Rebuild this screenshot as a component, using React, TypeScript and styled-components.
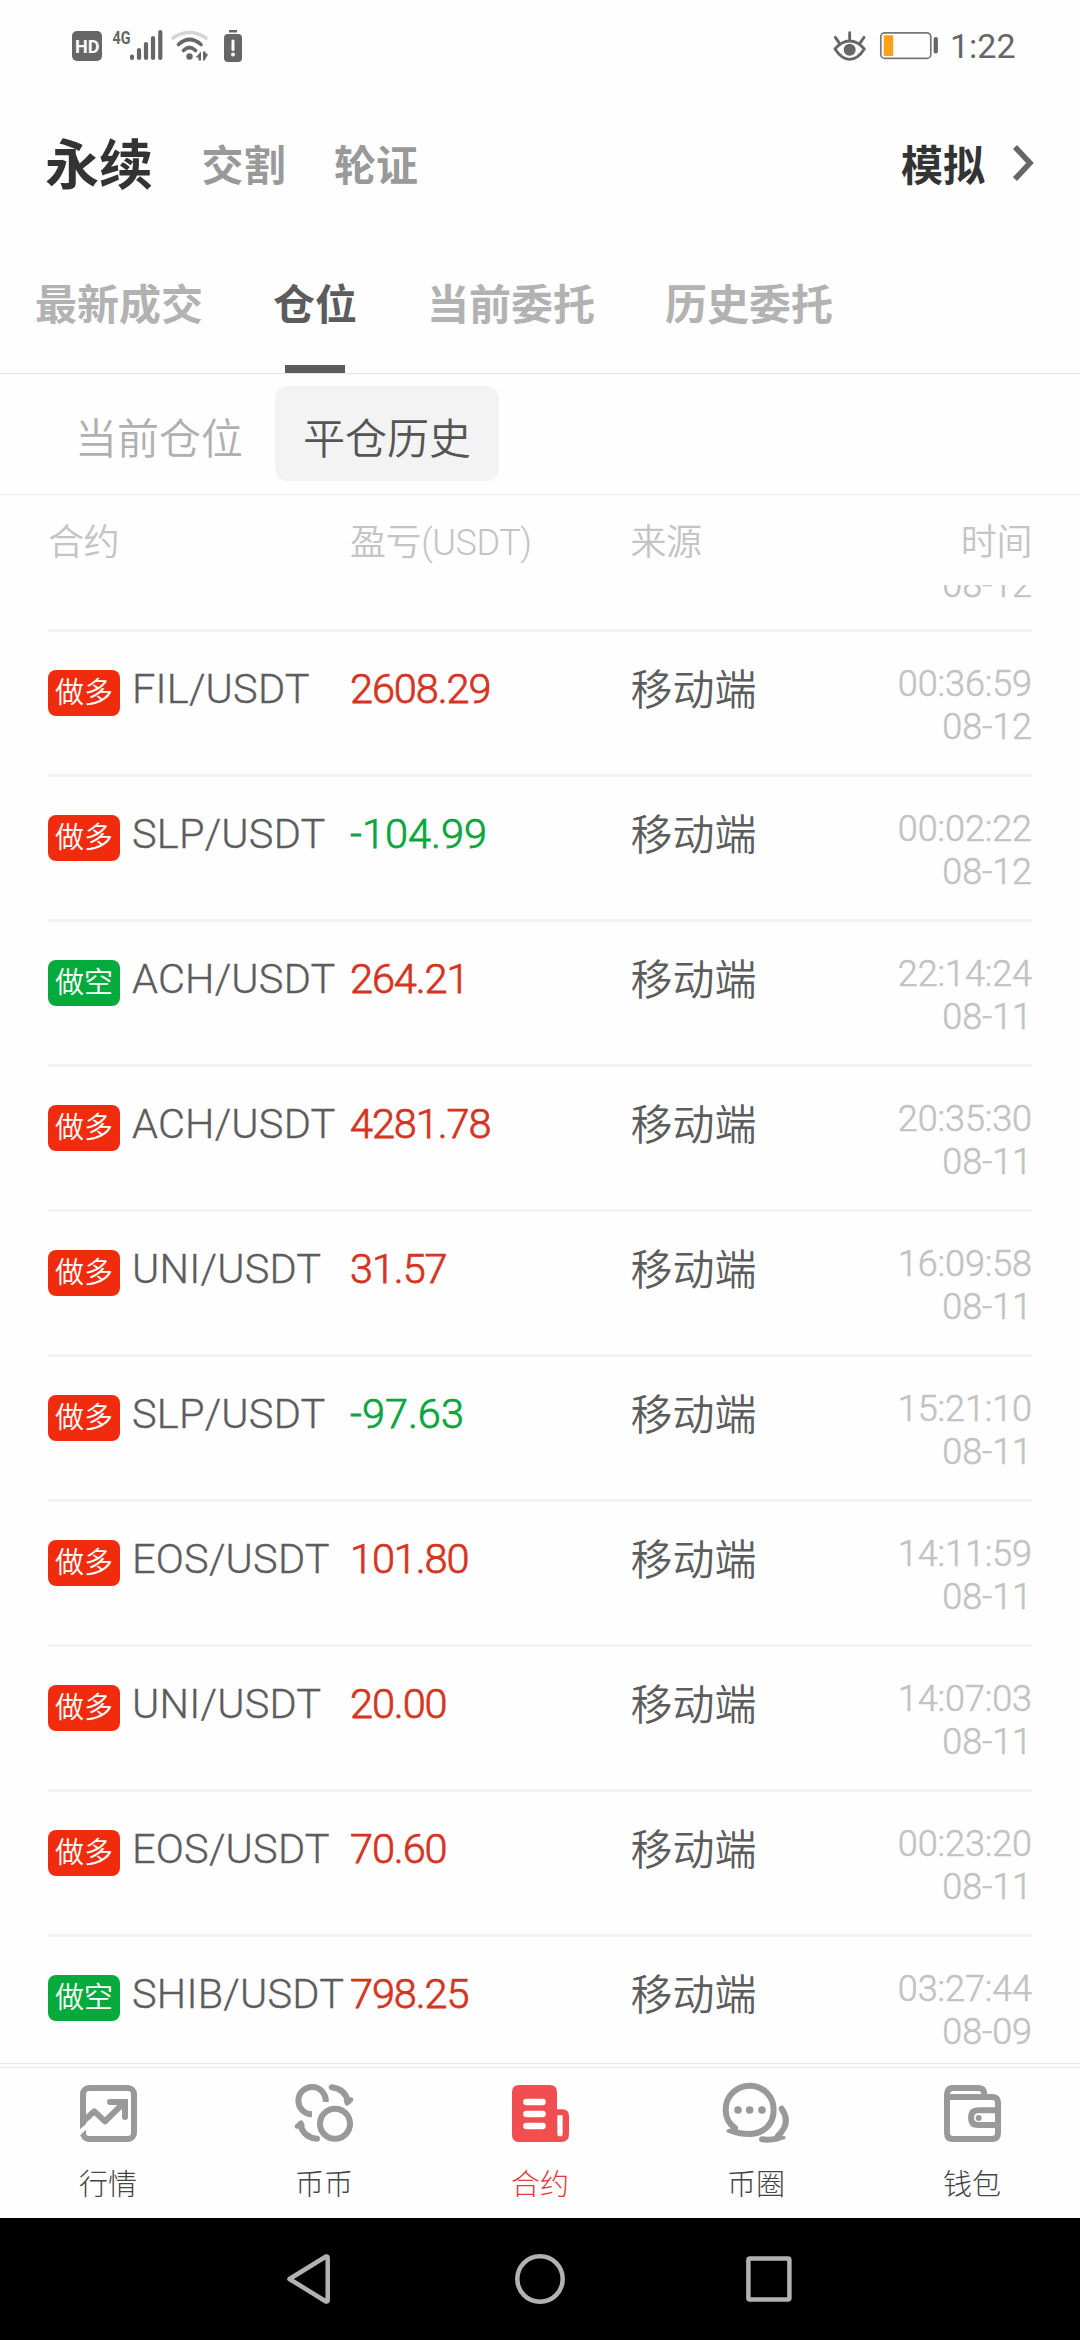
import React from "react";
import styled, { createGlobalStyle } from "styled-components";

const GlobalStyle = createGlobalStyle`
  * { box-sizing: border-box; }
  body { margin: 0; background: #fff; }
`;

const Screen = styled.div`
  width: 1080px;
  height: 2340px;
  display: flex;
  flex-direction: column;
  overflow: hidden;
  background: #fefefe;
  color: #5c5c5c;
  font-family: Roboto, "Noto Sans CJK SC", sans-serif;
  font-weight: 350;
  white-space: nowrap;
`;

const StatusBar = styled.header`
  height: 92px;
  flex: none;
  display: flex;
  justify-content: space-between;
  padding: 0 66px 0 71px;
`;

const StatusGroup = styled.div`
  display: flex;
  align-items: center;
`;

const Clock = styled.span`
  margin-left: 11px;
  width: 64px;
  font-size: 34px;
  line-height: 40px;
  font-weight: 400;
  color: #666;
`;

const TopNav = styled.nav`
  height: 148px;
  flex: none;
  display: flex;
  align-items: center;
  padding: 2px 46px 0 45px;
`;

const Product = styled.span<{ $active?: boolean }>`
  font-size: ${(p) => (p.$active ? 54 : 42)}px;
  line-height: 64px;
  font-weight: 700;
  color: ${(p) => (p.$active ? "#333" : "#999")};
  margin-right: 48.5px;
`;

const DemoLink = styled.div`
  margin-left: auto;
  display: flex;
  align-items: center;
  gap: 28px;
  font-size: 42px;
  line-height: 64px;
  font-weight: 700;
  color: #333;
`;

const TabBar = styled.nav`
  height: 134px;
  flex: none;
  display: flex;
  gap: 70px;
  padding: 0 35px;
  border-bottom: 1px solid #e6e6e6;
`;

const Tab = styled.div<{ $active?: boolean }>`
  display: flex;
  flex-direction: column;
  align-items: center;
  justify-content: space-between;
  padding-top: 35px;
  font-size: 42px;
  line-height: 62px;
  font-weight: 700;
  color: ${(p) => (p.$active ? "#5c5c5c" : "#b2b2b2")};
  &::after {
    content: "";
    width: 60px;
    height: 8px;
    background: ${(p) => (p.$active ? "#5c5c5c" : "transparent")};
  }
`;

const SubTabs = styled.nav`
  height: 121px;
  flex: none;
  display: flex;
  align-items: flex-start;
  gap: 4px;
  padding: 12px 47px 0;
  border-bottom: 1px solid #e9e9e9;
`;

const SubTab = styled.span<{ $active?: boolean }>`
  width: 224px;
  height: 95px;
  padding-top: 3px;
  display: flex;
  align-items: center;
  justify-content: center;
  border-radius: 12px;
  font-size: 42px;
  color: ${(p) => (p.$active ? "#555" : "#b0b0b0")};
  background: ${(p) => (p.$active ? "#f3f3f3" : "transparent")};
`;

const columns = `
  display: grid;
  grid-template-columns: 302px 280.5px 1fr auto;
  margin: 0 48px;
`;

const ListHead = styled.div`
  ${columns}
  height: 90px;
  flex: none;
  padding-top: 21px;
  font-size: 36px;
  line-height: 54px;
  letter-spacing: -0.4px;
  color: #c2c4c6;
`;

const List = styled.main`
  height: 1478px;
  flex: none;
  overflow: hidden;
`;

const Row = styled.div`
  ${columns}
  height: 145px;
  border-bottom: 3px solid #f2f2f2;
`;

const ClippedRow = styled.div`
  display: flex;
  justify-content: flex-end;
  align-items: flex-end;
  height: 47px;
  margin: 0 48px;
  padding-bottom: 22px;
  border-bottom: 3px solid #f2f2f2;
`;

const Contract = styled.div`
  display: flex;
  align-items: flex-start;
  padding-top: 33px;
  font-size: 41.5px;
  line-height: 48px;
  letter-spacing: 0.2px;
`;

const Pair = styled.span`
  -webkit-text-stroke: 0.35px currentColor;
`;

const Badge = styled.span<{ $short: boolean }>`
  width: 72px;
  height: 46px;
  margin: 5px 12px 0 0;
  border-radius: 8px;
  background: ${(p) => (p.$short ? "#04aa3c" : "#f12c0e")};
  color: #fff;
  font-size: 29px;
  line-height: 46px;
  letter-spacing: 0;
  text-align: center;
`;

const Profit = styled.span<{ $loss: boolean }>`
  padding-top: 33px;
  font-size: 41.5px;
  line-height: 48px;
  letter-spacing: ${(p) => (p.$loss ? 0 : -1.1)}px;
  -webkit-text-stroke: 0.75px currentColor;
  color: ${(p) => (p.$loss ? "#08a63c" : "#d5341f")};
`;

const Source = styled.span`
  padding-top: 29px;
  font-size: 42px;
  line-height: 60px;
`;

const Time = styled.div`
  padding-top: 31px;
  text-align: right;
`;

const Stamp = styled.div`
  font-size: 36px;
  line-height: 43px;
  letter-spacing: -0.1px;
  text-align: right;
  -webkit-text-stroke: 0.5px currentColor;
  color: #c2c2c2;
`;

const BottomTabs = styled.nav`
  height: 155px;
  flex: none;
  display: grid;
  grid-template-columns: repeat(5, 1fr);
  border-top: 1px solid #e8e8e8;
  padding-top: 3px;
`;

const BottomTab = styled.div<{ $active?: boolean }>`
  display: flex;
  flex-direction: column;
  align-items: center;
  padding-top: 12px;
  border-top: 1px solid #e8e8e8;
  font-size: 29px;
  line-height: 40px;
  font-weight: 300;
  color: ${(p) => (p.$active ? "#e2393d" : "#444")};
`;

const IconSlot = styled.div`
  height: 66px;
  margin-bottom: 19px;
  display: flex;
  align-items: center;
`;

const SystemNav = styled.footer`
  height: 122px;
  flex: none;
  display: flex;
  justify-content: center;
  align-items: center;
  background: #000;
`;

const GREY = "#999";

const StatusLeft = () => (
  <svg width="172" height="40" viewBox="70 26 172 40" fill="#666">
    <rect x="71" y="31" width="30" height="30" rx="5" />
    <text x="74" y="52.5" fontFamily="Roboto" fontWeight="700" fontSize="19" textLength="24.500" lengthAdjust="spacingAndGlyphs" fill="#fff">HD</text>
    <text x="111.500" y="43.5" fontFamily="Roboto" fontWeight="700" fontSize="19" textLength="18" lengthAdjust="spacingAndGlyphs">4G</text>
    <g stroke="#666" strokeWidth="4.2" strokeLinecap="round">
      <path d="M131 56.5V58M138 50V58M145 44V58M152 38V58M159.300 32V58" />
    </g>
    <g fill="none" strokeWidth="3.6" strokeLinecap="round">
      <path d="M172 38Q188 27 205 38" stroke="#d4d4d4" />
      <path d="M177.500 44.500Q188.500 34.500 200 44.500" stroke="#666" />
      <path d="M182.500 50.500Q188.500 44.500 194.500 50.500" stroke="#666" />
    </g>
    <circle cx="188.500" cy="56.500" r="3.200" />
    <path d="M200 51.500V60.500H197.500V57.500H194.500ZM202 51.500H204.500V53L207 54.500L203.500 60.500H202Z" />
    <rect x="228" y="30" width="8" height="2.500" />
    <rect x="223" y="34" width="18" height="28" rx="4" />
    <path d="M232 41V49.500" stroke="#fff" strokeWidth="3" strokeLinecap="round" />
    <circle cx="232" cy="54.500" r="1.900" fill="#fff" />
  </svg>
);

const EyeIcon = () => (
  <svg width="34" height="32" viewBox="0 0 102 96" fill="none" stroke="#666" strokeWidth="8.500" strokeLinecap="round">
    <path d="M6 57Q26 33 50 33T94 57Q74 88 50 88T6 57Z" strokeLinejoin="round" />
    <circle cx="50" cy="59" r="18" fill="#666" stroke="none" />
    <path d="M50 8V28M7 22L18 38M93 22L82 38" />
  </svg>
);

const BatterySvg = styled.svg`
  margin-left: 12px;
`;

const BatteryIcon = () => (
  <BatterySvg width="60" height="30" viewBox="880 31 60 30">
    <rect x="881.800" y="32.800" width="50" height="25.600" rx="4" fill="none" stroke="#777" strokeWidth="1.700" />
    <rect x="884.700" y="35.300" width="9.500" height="20.700" rx="1" fill="#ff9f1a" />
    <rect x="934.700" y="37" width="4.200" height="16.500" rx="2" fill="#666" />
  </BatterySvg>
);

const ChevronSvg = styled.svg`
  margin-bottom: 9px;
`;

const Chevron = () => (
  <ChevronSvg width="21" height="36" viewBox="0 0 21 36" fill="none" stroke="#666" strokeWidth="5.5">
    <path d="M2 2L17 18L2 34" />
  </ChevronSvg>
);

const MarketIcon = () => (
  <svg width="57" height="57" viewBox="60 44 171 171" fill="none" stroke={GREY} strokeWidth="18">
    <rect x="69" y="53" width="153" height="153" rx="18" />
    <path d="M50 195L84 164" stroke="#fefefe" strokeWidth="13" />
    <path d="M48 173L103 123L135 153L194 95" strokeLinejoin="round" />
    <path d="M150 95H195V140" strokeLinecap="round" />
  </svg>
);

const SwapIcon = () => (
  <svg width="60" height="58" viewBox="703 43 180 174" fill="none" stroke={GREY} strokeWidth="18">
    <path d="M757 134A41 41 0 1 1 798 97" />
    <circle cx="826" cy="162" r="45" />
    <g strokeLinecap="round" strokeLinejoin="round">
      <path d="M816 53Q856 58 865 96" />
      <path d="M772 207Q732 203 722 165" />
      <path d="M859 92L874 90L862 101Z" strokeWidth="14" />
      <path d="M728 167L712 170L724 159Z" strokeWidth="14" />
    </g>
  </svg>
);

const ContractIcon = () => (
  <svg width="57" height="57" viewBox="96 44 171 171">
    <path d="M118 44H209Q231 44 231 66V117H247Q267 117 267 137V191Q267 215 243 215H118Q96 215 96 193V66Q96 44 118 44Z" fill="#f04e50" />
    <path d="M139 95H188M139 131H188M139 167H188" stroke="#fefefe" strokeWidth="19" strokeLinecap="round" />
    <path d="M232 135H246Q248 135 248 138V190Q248 198 240 198T232 190Z" fill="#fefefe" />
  </svg>
);

const ChatIcon = () => (
  <svg width="68" height="62" viewBox="728 37 204 186" fill="none" stroke={GREY} strokeWidth="18" strokeLinecap="round" strokeLinejoin="round">
    <path d="M767 175Q739 155 739 120A72 72 0 0 1 883 120C883 166 850 193 811 193Q780 193 760 185" />
    <path d="M747 184L768 178L774 189Z" strokeWidth="11" />
    <g fill={GREY} stroke="none">
      <circle cx="776" cy="121" r="11.500" />
      <circle cx="811" cy="121" r="11.500" />
      <circle cx="848" cy="121" r="11.500" />
    </g>
    <path d="M907 117Q937 160 896 198" />
    <path d="M848 209Q872 212 895 206" />
    <path d="M895 200L914 204L890 210Z" strokeWidth="10" />
  </svg>
);

const WalletIcon = () => (
  <svg width="57" height="57" viewBox="552 75 171 171" fill="none" stroke={GREY} strokeWidth="18">
    <path d="M561 111H696Q714 111 714 129V219Q714 237 696 237H579Q561 237 561 219V104Q561 84 579 84H656Q673 84 673 106" />
    <path d="M714 151H655Q633 151 633 173T655 195H714" />
    <circle cx="656" cy="174" r="9" fill={GREY} stroke="none" />
  </svg>
);

const SystemIcons = () => (
  <svg width="510" height="56" viewBox="285 2251 510 56" fill="none" stroke="#b2b2b2" strokeWidth="4.500" strokeLinejoin="round">
    <path d="M289.500 2279L326 2256.500Q327.700 2256 327.700 2258V2300Q327.700 2302 326 2301.500Z" />
    <circle cx="540" cy="2279" r="22.700" />
    <rect x="748.400" y="2258.500" width="41" height="41" rx="1.500" />
  </svg>
);

const records = [
  { pair: "FIL/USDT", profit: "2608.29", time: "00:36:59", date: "08-12" },
  { pair: "SLP/USDT", profit: "-104.99", time: "00:02:22", date: "08-12" },
  { pair: "ACH/USDT", profit: "264.21", time: "22:14:24", date: "08-11", short: true },
  { pair: "ACH/USDT", profit: "4281.78", time: "20:35:30", date: "08-11" },
  { pair: "UNI/USDT", profit: "31.57", time: "16:09:58", date: "08-11" },
  { pair: "SLP/USDT", profit: "-97.63", time: "15:21:10", date: "08-11" },
  { pair: "EOS/USDT", profit: "101.80", time: "14:11:59", date: "08-11" },
  { pair: "UNI/USDT", profit: "20.00", time: "14:07:03", date: "08-11" },
  { pair: "EOS/USDT", profit: "70.60", time: "00:23:20", date: "08-11" },
  { pair: "SHIB/USDT", profit: "798.25", time: "03:27:44", date: "08-09", short: true },
];

const destinations = [
  { label: "行情", icon: <MarketIcon /> },
  { label: "币币", icon: <SwapIcon /> },
  { label: "合约", icon: <ContractIcon />, active: true },
  { label: "币圈", icon: <ChatIcon /> },
  { label: "钱包", icon: <WalletIcon /> },
];

export default function App() {
  return (
    <Screen>
      <GlobalStyle />
      <StatusBar>
        <StatusGroup><StatusLeft /></StatusGroup>
        <StatusGroup>
          <EyeIcon />
          <BatteryIcon />
          <Clock>1:22</Clock>
        </StatusGroup>
      </StatusBar>
      <TopNav>
        <Product $active>永续</Product>
        <Product>交割</Product>
        <Product>轮证</Product>
        <DemoLink>模拟<Chevron /></DemoLink>
      </TopNav>
      <TabBar>
        <Tab>最新成交</Tab>
        <Tab $active>仓位</Tab>
        <Tab>当前委托</Tab>
        <Tab>历史委托</Tab>
      </TabBar>
      <SubTabs>
        <SubTab>当前仓位</SubTab>
        <SubTab $active>平仓历史</SubTab>
      </SubTabs>
      <ListHead>
        <span>合约</span>
        <span>盈亏(USDT)</span>
        <span>来源</span>
        <span>时间</span>
      </ListHead>
      <List>
        <ClippedRow><Stamp>08-12</Stamp></ClippedRow>
        {records.map((r) => (
          <Row key={r.date + r.time}>
            <Contract>
              <Badge $short={!!r.short}>{r.short ? "做空" : "做多"}</Badge>
              <Pair>{r.pair}</Pair>
            </Contract>
            <Profit $loss={r.profit.startsWith("-")}>{r.profit}</Profit>
            <Source>移动端</Source>
            <Time>
              <Stamp>{r.time}</Stamp>
              <Stamp>{r.date}</Stamp>
            </Time>
          </Row>
        ))}
      </List>
      <BottomTabs>
        {destinations.map((d) => (
          <BottomTab key={d.label} $active={d.active}>
            <IconSlot>{d.icon}</IconSlot>
            {d.label}
          </BottomTab>
        ))}
      </BottomTabs>
      <SystemNav><SystemIcons /></SystemNav>
    </Screen>
  );
}
